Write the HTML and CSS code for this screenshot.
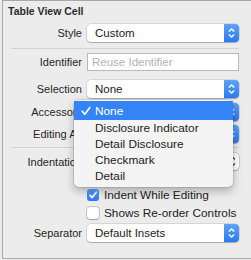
FILE: index.html
```html
<!DOCTYPE html>
<html>
<head>
<meta charset="utf-8">
<link rel="stylesheet" href="styles.css">
</head>
<body>
<div class="panel">
  <div class="title">Table View Cell</div>

  <div class="row r-style">
    <span class="label">Style</span>
    <div class="popup"><span class="val">Custom</span><span class="arrows"><svg viewBox="0 0 15 18" width="15" height="18"><path d="M4.8 7.6 L7.5 5 L10.2 7.6 M4.8 10.4 L7.5 13 L10.2 10.4" fill="none" stroke="#fff" stroke-width="1.4"/></svg></span></div>
  </div>

  <div class="divider d1"></div>

  <div class="row r-ident">
    <span class="label">Identifier</span>
    <div class="field"><span class="placeholder">Reuse Identifier</span></div>
  </div>

  <div class="row r-sel">
    <span class="label">Selection</span>
    <div class="popup"><span class="val">None</span><span class="arrows"><svg viewBox="0 0 15 18" width="15" height="18"><path d="M4.8 7.6 L7.5 5 L10.2 7.6 M4.8 10.4 L7.5 13 L10.2 10.4" fill="none" stroke="#fff" stroke-width="1.4"/></svg></span></div>
  </div>

  <div class="row r-acc">
    <span class="label">Accessory</span>
    <div class="popup"><span class="val">None</span><span class="arrows"><svg viewBox="0 0 15 18" width="15" height="18"><path d="M4.8 7.6 L7.5 5 L10.2 7.6 M4.8 10.4 L7.5 13 L10.2 10.4" fill="none" stroke="#fff" stroke-width="1.4"/></svg></span></div>
  </div>

  <div class="row r-edit">
    <span class="label">Editing Ac</span>
    <div class="popup"><span class="val">None</span><span class="arrows"><svg viewBox="0 0 15 18" width="15" height="18"><path d="M4.8 7.6 L7.5 5 L10.2 7.6 M4.8 10.4 L7.5 13 L10.2 10.4" fill="none" stroke="#fff" stroke-width="1.4"/></svg></span></div>
  </div>

  <div class="divider d2"></div>

  <div class="row r-indent">
    <span class="label">Indentation</span>
    <div class="indent-ctrls">
      <div class="num">0</div>
      <div class="stepper"><svg viewBox="0 0 13 17" width="13" height="17"><path d="M4 6.5 L6.5 4 L9 6.5 M4 10.5 L6.5 13 L9 10.5" fill="none" stroke="#444" stroke-width="1.2"/></svg></div>
      <div class="num n2">10</div>
      <div class="stepper"><svg viewBox="0 0 13 17" width="13" height="17"><path d="M4 6.5 L6.5 4 L9 6.5 M4 10.5 L6.5 13 L9 10.5" fill="none" stroke="#444" stroke-width="1.2"/></svg></div>
    </div>
  </div>

  <div class="row r-check1">
    <span class="label"></span>
    <div class="check"><span class="box on"><svg viewBox="0 0 12 12" width="12" height="12"><path d="M3 6.3 L5.2 8.6 L9.2 3.2" fill="none" stroke="#fff" stroke-width="1.7" stroke-linecap="round" stroke-linejoin="round"/></svg></span><span class="ctext">Indent While Editing</span></div>
  </div>

  <div class="row r-check2">
    <span class="label"></span>
    <div class="check"><span class="box"></span><span class="ctext">Shows Re-order Controls</span></div>
  </div>

  <div class="row r-sep">
    <span class="label">Separator</span>
    <div class="popup"><span class="val">Default Insets</span><span class="arrows"><svg viewBox="0 0 15 18" width="15" height="18"><path d="M4.8 7.6 L7.5 5 L10.2 7.6 M4.8 10.4 L7.5 13 L10.2 10.4" fill="none" stroke="#fff" stroke-width="1.4"/></svg></span></div>
  </div>

  <div class="menu">
    <div class="item sel"><svg class="tick" viewBox="0 0 10 10" width="10" height="10"><path d="M1.2 5.2 L3.8 8.2 L8.8 1.5" fill="none" stroke="#fff" stroke-width="1.7" stroke-linecap="round" stroke-linejoin="round"/></svg>None</div>
    <div class="item">Disclosure Indicator</div>
    <div class="item">Detail Disclosure</div>
    <div class="item">Checkmark</div>
    <div class="item">Detail</div>
  </div>
</div>
</body>
</html>
```

FILE: styles.css
```css
html, body {
  margin: 0;
  padding: 0;
  background: #ececec;
}
body {
  font-family: "Liberation Sans", Arial, sans-serif;
  color: #262626;
  width: 251px;
  height: 260px;
  overflow: hidden;
}
.panel {
  position: relative;
  box-sizing: border-box;
  margin-left: 2px;
  height: 259px;
  border: 1px solid #a8a8a8;
  border-right: none;
  display: flex;
  flex-direction: column;
}
.title {
  height: 23px;
  box-sizing: border-box;
  padding: 4px 0 0 5px;
  font-size: 10.5px;
  font-weight: bold;
  line-height: 12px;
  color: #2b2b2b;
}
.row {
  display: grid;
  grid-template-columns: 79px 152px;
  column-gap: 5px;
  align-items: center;
  height: 18px;
}
.label {
  text-align: right;
  font-size: 11px;
  white-space: nowrap;
  color: #262626;
}
.divider {
  margin-left: 8px;
  width: 228px;
  height: 1px;
  background: #d3d3d3;
}
.d1 { margin-top: 6px; margin-bottom: 4px; }
.r-sel { margin-top: 9px; }
.r-acc { margin-top: 5px; }
.r-edit { margin-top: 4px; }
.d2 { margin-top: 4px; margin-bottom: 5px; }
.r-indent { height: 17px; }
.r-check1 { margin-top: 19px; height: 12px; }
.r-check2 { margin-top: 6px; height: 12px; }
.r-sep { margin-top: 5px; }

.popup {
  height: 18px;
  box-sizing: border-box;
  background: #fff;
  border-radius: 4px;
  box-shadow: 0 0 0 0.5px rgba(0,0,0,0.18), 0 1px 1px rgba(0,0,0,0.22);
  display: flex;
  align-items: center;
  overflow: hidden;
}
.val {
  flex: 1;
  padding-left: 8px;
  font-size: 11.5px;
  color: #222;
  white-space: nowrap;
}
.arrows {
  width: 15px;
  height: 18px;
  background: linear-gradient(#5ea3fa, #2a79f4);
  display: flex;
}
.field {
  height: 18px;
  box-sizing: border-box;
  background: #fff;
  border: 1px solid #b9b9b9;
  display: flex;
  align-items: center;
  padding-left: 4px;
}
.placeholder {
  font-size: 11.5px;
  color: #b3b3b3;
  white-space: nowrap;
}
.indent-ctrls {
  display: flex;
  align-items: center;
  height: 17px;
}
.num {
  width: 34px;
  height: 17px;
  box-sizing: border-box;
  background: #fff;
  border: 1px solid #b9b9b9;
  font-size: 11px;
  text-align: right;
  padding-right: 4px;
  line-height: 15px;
}
.n2 { margin-left: auto; }
.stepper {
  width: 13px;
  height: 17px;
  margin-left: 2px;
  background: #fff;
  border-radius: 4px;
  box-shadow: 0 0 0 0.5px rgba(0,0,0,0.25), 0 1px 1px rgba(0,0,0,0.2);
  display: flex;
}
.check {
  display: flex;
  align-items: center;
  height: 12px;
}
.box {
  width: 12px;
  height: 12px;
  box-sizing: border-box;
  border-radius: 3px;
  background: #fff;
  box-shadow: 0 0 0 0.5px rgba(0,0,0,0.3), 0 0.5px 1px rgba(0,0,0,0.2);
  display: flex;
}
.box.on {
  background: linear-gradient(#5ea3fa, #2a79f4);
  box-shadow: none;
}
.ctext {
  margin-left: 5px;
  font-size: 11.8px;
  color: #222;
  white-space: nowrap;
}
.menu {
  position: absolute;
  left: 71px;
  top: 99px;
  width: 159px;
  height: 87px;
  box-sizing: border-box;
  padding-top: 1px;
  background: #f4f4f4;
  border-radius: 5px;
  box-shadow: 0 0 0 0.5px rgba(0,0,0,0.18), 0 4px 10px rgba(0,0,0,0.28);
}
.item {
  position: relative;
  height: 16px;
  line-height: 16px;
  padding-left: 21px;
  font-size: 11.8px;
  color: #222;
  white-space: nowrap;
}
.item.sel {
  height: 19px;
  line-height: 20px;
  background: #3584f7;
  color: #fff;
}
.tick {
  position: absolute;
  left: 7px;
  top: 5px;
}
```
